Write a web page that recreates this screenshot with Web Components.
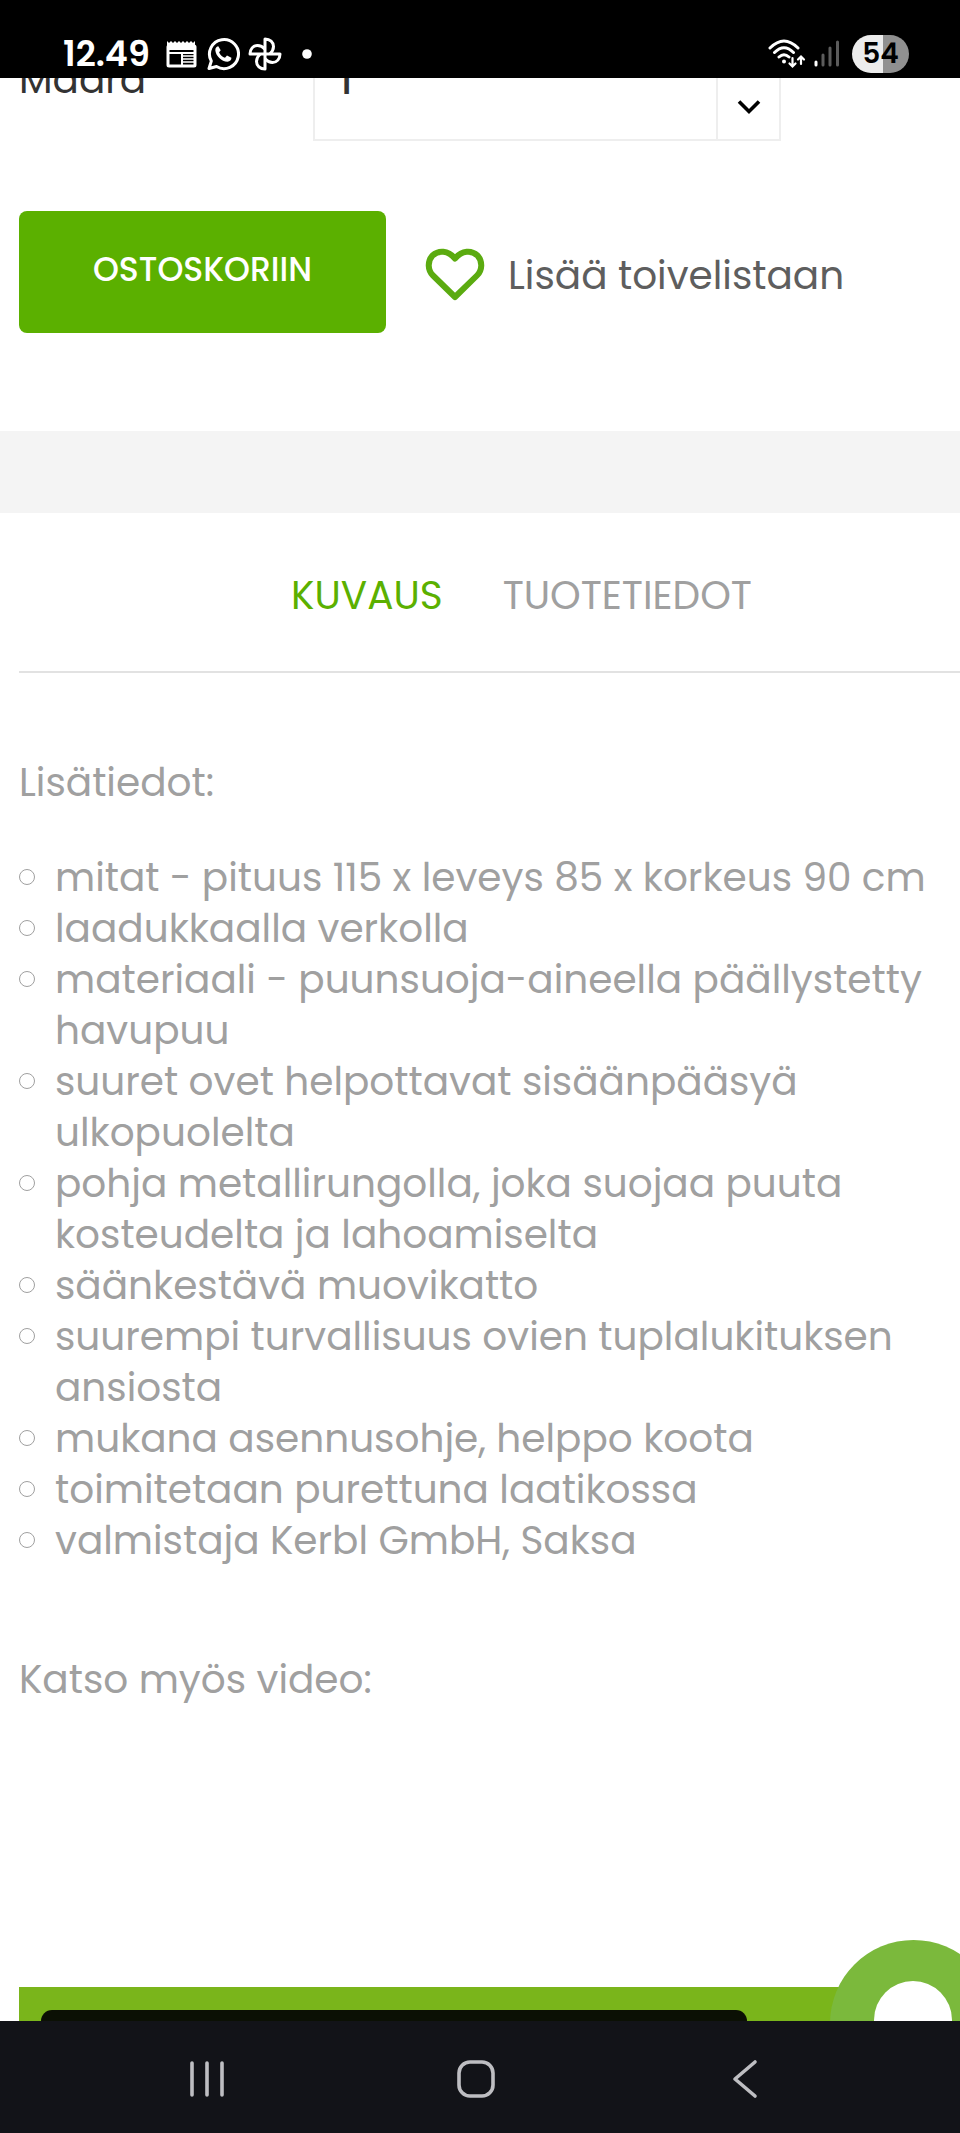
<!DOCTYPE html>
<html lang="fi">
<head>
<meta charset="utf-8">
<meta name="viewport" content="width=device-width, initial-scale=1">
<title>Tuote</title>
<style>
  :root {
    --green: #5bb000;
    --grey: #a0a0a0;
    --line: #e2e2e2;
    --gutter: 19px;
  }
  body {
    margin: 0;
    min-height: 100vh;
    display: flex;
    flex-direction: column;
    background: #fff;
    font: 39px/51px Poppins, Inter, sans-serif;
    color: var(--grey);
  }
  main {
    flex: 1;
    display: flex;
    flex-direction: column;
    overflow: hidden;
  }
</style>
</head>
<body>
<phone-status time="12.49" battery="54"></phone-status>
<main>
  <product-form></product-form>
  <product-tabs>
    <a href="#kuvaus" class="active">KUVAUS</a>
    <a href="#tuotetiedot">TUOTETIEDOT</a>
  </product-tabs>
  <product-description>
    <p>Lisätiedot:</p>
    <ul>
      <li>mitat - pituus 115 x leveys 85 x korkeus 90 cm</li>
      <li>laadukkaalla verkolla</li>
      <li>materiaali - puunsuoja-aineella päällystetty havupuu</li>
      <li>suuret ovet helpottavat sisäänpääsyä ulkopuolelta</li>
      <li>pohja metallirungolla, joka suojaa puuta kosteudelta ja lahoamiselta</li>
      <li>säänkestävä muovikatto</li>
      <li>suurempi turvallisuus ovien tuplalukituksen ansiosta</li>
      <li>mukana asennusohje, helppo koota</li>
      <li>toimitetaan purettuna laatikossa</li>
      <li>valmistaja Kerbl GmbH, Saksa</li>
    </ul>
    <p>Katso myös video:</p>
  </product-description>
  <product-video></product-video>
</main>
<phone-nav></phone-nav>

<script>
customElements.define(
  'phone-status',
  class PhoneStatus extends HTMLElement {
    constructor() {
      super()
      this.attachShadow({ mode: 'open' })
      const template = document.createElement('template')
      template.innerHTML = `
        <style>
          :host {
            display: flex;
            align-items: center;
            box-sizing: border-box;
            height: 78px;
            padding: 30px 51px 0 63px;
            background: #000;
            color: #fff;
          }
          svg { display: block; }
          .time {
            margin-right: 16px;
            font-size: 35px;
            line-height: 48px;
            font-weight: 600;
          }
          .left { display: flex; align-items: center; gap: 8px; }
          .right { display: flex; align-items: center; gap: 8px; margin-left: auto; }
          .battery {
            margin-left: 4px;
            width: 57px;
            border-radius: 19px;
            background: linear-gradient(to right, #ececec 54%, #909090 54%);
            color: #000;
            font-size: 28px;
            line-height: 38px;
            font-weight: 600;
            text-align: center;
          }
        </style>
        <span class="time"></span>
        <div class="left">
          <svg width="32" height="34" viewBox="0 0 32 34" fill="none" stroke="#fff">
            <path d="M1 4l2 2 2-2 2 2 2-2 2 2 2-2 2 2 2-2 2 2 2-2 2 2 2-2 2 2 2-2v9H1z" fill="#fff" stroke="none"/>
            <rect x="2" y="9" width="27" height="20" rx="1" stroke-width="3"/>
            <path d="M3 16h25M16 16v13" stroke-width="2"/>
            <path d="M17 19h11M17 22h11M17 25h11" stroke-width="1.4"/>
          </svg>
          <svg width="34" height="34" viewBox="0 0 34 34">
            <path d="M3 31.500l2.300-7.400A14.500 14.500 0 1 1 10.500 29.500z" fill="none" stroke="#fff" stroke-width="3" stroke-linejoin="round"/>
            <path d="M12.300 9.200c-.8-.1-3.200 1.200-3 4 .5 5.700 6.200 11.300 12.200 11.500 2.300 0 4.100-2 3.900-3.900l-4.400-2.400-2 2.300c-2.700-.8-4.800-2.800-5.900-5.500l1.600-2z" fill="#fff"/>
          </svg>
          <svg width="34" height="34" viewBox="0 0 34 34" fill="none" stroke="#fff" stroke-width="3" stroke-linejoin="round">
            <path d="M17 17V2c5 0 8.500 3.200 8.500 7.500 0 3-1.500 5.500-3.700 7.500"/>
            <path d="M17 17h15c0 5-3.200 8.500-7.500 8.500-3 0-5.500-1.500-7.500-3.700"/>
            <path d="M17 17v15c-5 0-8.500-3.200-8.500-7.500 0-3 1.500-5.500 3.700-7.500"/>
            <path d="M17 17H2c0-5 3.200-8.500 7.500-8.500 3 0 5.500 1.500 7.500 3.700"/>
          </svg>
          <svg width="34" height="34" viewBox="0 0 34 34"><circle cx="17" cy="17" r="4.800" fill="#fff"/></svg>
        </div>
        <div class="right">
          <svg width="38" height="34" viewBox="0 0 38 34" fill="none" stroke="#fff" stroke-width="3" stroke-linecap="round">
            <path d="M2 11Q16-3 30 11M6.500 15.500Q16 6 25.500 15.500M11 20Q16 15.500 21 20"/>
            <circle cx="16" cy="24.500" r="2" fill="#fff" stroke="none"/>
            <path d="M24.500 21v8M21.500 26.500l3 3 3-3M33 27v-7M30 22.500l3-3 3 3" stroke-width="2.200"/>
          </svg>
          <svg width="26" height="34" viewBox="0 0 26 34" stroke="#5c5c5c" stroke-width="3" stroke-linecap="round">
            <path d="M2 25v3" stroke="#fff"/>
            <path d="M9 18v10M16 11v17M23.500 5v23"/>
          </svg>
          <div class="battery"></div>
        </div>
      `
      this.shadowRoot.appendChild(template.content.cloneNode(true))
    }

    connectedCallback() {
      this.shadowRoot.querySelector('.time').textContent = this.getAttribute('time')
      this.shadowRoot.querySelector('.battery').textContent = this.getAttribute('battery')
    }
  }
)

customElements.define(
  'product-form',
  class ProductForm extends HTMLElement {
    constructor() {
      super()
      this.attachShadow({ mode: 'open' })
      const template = document.createElement('template')
      template.innerHTML = `
        <style>
          /* scrolled partly under the status bar */
          :host {
            display: block;
            margin-top: -57px;
            padding: 0 var(--gutter) 98px;
            border-bottom: 82px solid #f4f4f4;
          }
          .quantity {
            display: grid;
            grid-template-columns: 294px minmax(0, 468px);
            align-items: center;
            color: #333;
          }
          label { padding-bottom: 4px; }
          .select {
            display: grid;
            grid-template-columns: 1fr 63px;
            border: 2px solid #eee;
          }
          select {
            grid-area: 1 / 1 / 2 / 3;
            appearance: none;
            height: 116px;
            padding: 0 24px 2px;
            border: none;
            border-radius: 0;
            background: none;
            font: inherit;
            font-weight: 500;
            color: inherit;
          }
          .arrow {
            grid-area: 1 / 2;
            display: grid;
            place-items: center;
            padding-top: 52px;
            border-left: 2px solid #eee;
            pointer-events: none;
          }
          .actions {
            display: flex;
            align-items: center;
            margin-top: 70px;
          }
          .buy {
            width: 367px;
            height: 122px;
            margin-right: 38px;
            padding: 0 0 4px;
            border: none;
            border-radius: 8px;
            background: var(--green);
            color: #fff;
            font: 500 33px/48px Poppins, Inter, sans-serif;
          }
          .wish {
            display: flex;
            align-items: center;
            gap: 22px;
            padding-top: 6px;
            color: #5e5e5e;
            text-decoration: none;
          }
          svg { display: block; }
        </style>
        <div class="quantity">
          <label for="qty">Määrä</label>
          <div class="select">
            <select id="qty"><option>1</option><option>2</option><option>3</option></select>
            <span class="arrow">
              <svg width="24" height="16" viewBox="0 0 24 16" fill="none" stroke="#000" stroke-width="3.600"><path d="M2 2.500l10 10 10-10"/></svg>
            </span>
          </div>
        </div>
        <div class="actions">
          <button class="buy">OSTOSKORIIN</button>
          <a class="wish" href="#toivelista">
            <svg width="62" height="56" viewBox="0 0 62 56" fill="none" stroke="#5bab10" stroke-width="6" stroke-linejoin="round">
              <path d="M31 50L9 28.500A14.500 14.500 0 0 1 8.500 8.500C14.500 3 24 3 31 11.500 38 3 47.500 3 53.500 8.500A14.500 14.500 0 0 1 53 28.500z"/>
            </svg>
            Lisää toivelistaan
          </a>
        </div>
      `
      this.shadowRoot.appendChild(template.content.cloneNode(true))
    }
  }
)

customElements.define(
  'product-tabs',
  class ProductTabs extends HTMLElement {
    constructor() {
      super()
      this.attachShadow({ mode: 'open' })
      const template = document.createElement('template')
      template.innerHTML = `
        <style>
          :host {
            display: flex;
            justify-content: center;
            gap: 60px;
            margin-left: var(--gutter);
            padding: 57px 0 50px 64px;
            border-bottom: 2px solid var(--line);
          }
          ::slotted(a) {
            color: var(--grey);
            text-decoration: none;
          }
          ::slotted(a.active) {
            color: var(--green);
          }
        </style>
        <slot></slot>
      `
      this.shadowRoot.appendChild(template.content.cloneNode(true))
    }
  }
)

customElements.define(
  'product-description',
  class ProductDescription extends HTMLElement {
    constructor() {
      super()
      this.attachShadow({ mode: 'open' })
      this.shadowRoot.innerHTML = `
        <style>
          :host {
            display: block;
            padding: 84px 0 0 var(--gutter);
          }
        </style>
        <div class="text"></div>
      `
    }

    connectedCallback() {
      // list items need their own bullets, so the content moves inside
      const $text = this.shadowRoot.querySelector('.text')
      const style = document.createElement('style')
      style.textContent = `
        p { margin: 0; }
        ul {
          margin: 44px 0 88px;
          padding: 0;
          list-style: none;
        }
        li {
          display: grid;
          grid-template-columns: 16px 1fr;
          gap: 20px;
        }
        li::before {
          content: '';
          box-sizing: border-box;
          width: 16px;
          height: 16px;
          margin-top: 17px;
          border: 1px solid var(--grey);
          border-radius: 50%;
        }
      `
      this.shadowRoot.insertBefore(style, $text)
      while (this.firstChild) $text.appendChild(this.firstChild)
    }
  }
)

customElements.define(
  'product-video',
  class ProductVideo extends HTMLElement {
    constructor() {
      super()
      this.attachShadow({ mode: 'open' })
      const template = document.createElement('template')
      template.innerHTML = `
        <style>
          :host {
            position: relative;
            display: flex;
            flex: 1;
            margin: 282px 0 0 var(--gutter);
            padding: 23px 213px 0 22px;
            background: #7ab51b;
          }
          .frame {
            flex: 1;
            border-radius: 11px 11px 0 0;
            background: #0b1004;
          }
          /* chat bubble floats over the page */
          .chat {
            position: absolute;
            top: -47px;
            right: -37px;
            width: 167px;
            height: 167px;
            padding: 0;
            border: none;
            border-radius: 50%;
            background: #7bb93c;
          }
          .chat svg { display: block; }
        </style>
        <div class="frame"></div>
        <button class="chat" aria-label="Chat">
          <svg width="167" height="167" viewBox="0 0 167 167"><circle cx="83" cy="80" r="39" fill="#fff"/></svg>
        </button>
      `
      this.shadowRoot.appendChild(template.content.cloneNode(true))
    }
  }
)

customElements.define(
  'phone-nav',
  class PhoneNav extends HTMLElement {
    constructor() {
      super()
      this.attachShadow({ mode: 'open' })
      const template = document.createElement('template')
      template.innerHTML = `
        <style>
          :host {
            display: grid;
            grid-template-columns: repeat(3, 1fr);
            height: 112px;
            padding: 0 81px 0 72px;
            background: #121318;
          }
          button {
            display: grid;
            place-items: center;
            padding: 4px 0 0;
            border: none;
            background: none;
          }
          svg {
            fill: none;
            stroke: #bebec2;
            stroke-width: 3.6px;
            stroke-linecap: round;
            stroke-linejoin: round;
          }
        </style>
        <button aria-label="Viimeisimmät"><svg width="40" height="40"><path d="M5 4v32M20 4v32M35 4v32"/></svg></button>
        <button aria-label="Koti"><svg width="40" height="40"><rect x="3" y="3" width="34" height="34" rx="11"/></svg></button>
        <button aria-label="Takaisin"><svg width="40" height="40"><path d="M30 3L10 20l20 17"/></svg></button>
      `
      this.shadowRoot.appendChild(template.content.cloneNode(true))
    }
  }
)
</script>
</body>
</html>
